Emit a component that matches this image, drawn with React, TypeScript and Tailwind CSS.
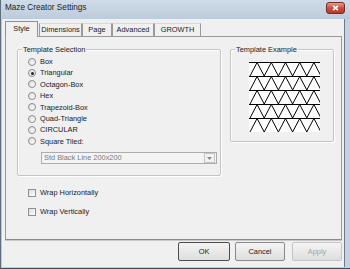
import React from "react";

const font = { fontFamily: '"Liberation Sans", Arial, sans-serif' };

function Radio({ label, checked }: { label: string; checked?: boolean }) {
  return (
    <div className="flex items-center h-[11.4px]">
      <span className="w-[8px] h-[8px] rounded-full border border-[#8a8a8a] bg-gradient-to-br from-[#dedede] to-[#ffffff] flex items-center justify-center shrink-0">
        {checked && <span className="w-[3px] h-[3px] rounded-full bg-[#1e1e1e]" />}
      </span>
      <span className="ml-[4px] text-[#1a1a1a]">{label}</span>
    </div>
  );
}

function Check({ label }: { label: string }) {
  return (
    <div className="flex items-center h-[11.4px]">
      <span className="w-[8px] h-[8px] border border-[#8e8f8f] bg-gradient-to-br from-[#dcdcdc] to-[#ffffff] shrink-0" />
      <span className="ml-[4px] text-[#1a1a1a]">{label}</span>
    </div>
  );
}

function Triangles() {
  const rows = [0, 14, 28, 42, 56];
  return (
    <svg width="71" height="70" viewBox="0 0 71 70" className="block bg-white">
      {rows.map((y, r) => {
        const pts: string[] = [];
        const bottom = r === rows.length - 1 ? 70 : y + 14;
        for (let k = 0; k < 6; k++) {
          const bx = 1 + 14.2 * k;
          pts.push(`${bx},${bottom}`);
          pts.push(`${bx + 7.1},${y + 0.5}`);
        }
        return (
          <g key={r} stroke="#000" strokeWidth="1" fill="none">
            <line x1="0" y1={y + 0.5} x2="71" y2={y + 0.5} />
            <polyline points={pts.join(" ")} />
          </g>
        );
      })}
    </svg>
  );
}

function Group({
  title,
  className,
  children,
}: {
  title: string;
  className: string;
  children?: React.ReactNode;
}) {
  return (
    <div
      className={`border border-[#c4c4c4] rounded-[2px] shadow-[inset_1px_1px_0_#ffffff,1px_1px_0_#ffffff] ${className}`}
    >
      <div className="-mt-[5px] ml-[4px] px-[1px] w-fit leading-[9px] bg-[#f0f0f0] text-[#1a1a1a]">
        {title}
      </div>
      {children}
    </div>
  );
}

function Tab({ label, w, active }: { label: string; w: string; active?: boolean }) {
  if (active) {
    return (
      <div
        className={`${w} h-[16px] -mb-px border border-b-0 border-[#8e8f8f] bg-[#f0f0f0] flex items-center justify-center pb-[1px] relative z-10 text-[#1a1a1a]`}
      >
        {label}
      </div>
    );
  }
  return (
    <div
      className={`${w} h-[13px] border-x border-t border-x-[#9a9a9a] border-t-[#dadada] bg-[#f0f0f0] flex items-center justify-center text-[#1a1a1a]`}
    >
      {label}
    </div>
  );
}

function Btn({ label, w, def, disabled }: { label: string; w: string; def?: boolean; disabled?: boolean }) {
  return (
    <div
      className={`${w} h-[19px] rounded-[2px] border flex items-center justify-center bg-gradient-to-b from-[#f4f4f4] to-[#dedede] ${
        def ? "border-[#4e4e4e]" : disabled ? "border-[#c4c4c4]" : "border-[#8a8a8a]"
      } ${disabled ? "text-[#a3a3a3]" : "text-[#1a1a1a]"}`}
    >
      {label}
    </div>
  );
}

export default function App() {
  return (
    <div
      style={font}
      className="w-[350px] h-[269px] bg-[#c3d2e2] border-l border-l-[#5d6e80] flex flex-col text-[7.4px] leading-none overflow-hidden"
    >
      {/* Title bar */}
      <div className="h-[19px] shrink-0 flex items-center pl-[4px] pr-[5px] bg-gradient-to-b from-[#cfdbe8] to-[#bccbdc]">
        <span className="text-[8.2px] text-[#1c1c1c] mt-[-2px]">Maze Creator Settings</span>
        <div className="ml-auto mt-[-3px] w-[19px] h-[12px] rounded-[3px] border border-[#7a2a22] bg-gradient-to-b from-[#e49a8c] via-[#c7503f] to-[#b3382a] flex items-center justify-center">
          <svg width="7" height="6" viewBox="0 0 7 6">
            <path d="M1 0.8 L6 5.2 M6 0.8 L1 5.2" stroke="#ffffff" strokeWidth="1.6" />
          </svg>
        </div>
      </div>

      {/* Client + frame */}
      <div className="flex-1 min-h-0 flex">
        <div className="w-[1px] bg-[#b9c9d9]" />
        <div className="flex-1 min-h-0 flex flex-col bg-[#f0f0f0] pl-[3px] pr-[2px] pt-[2px] pb-[6px] border-r border-r-[#6b7b8c]">
          {/* Tabs */}
          <div className="flex items-end h-[15px] shrink-0">
            <Tab label="Style" w="w-[33px]" active />
            <div className="w-[1px]" />
            <Tab label="Dimensions" w="w-[43px]" />
            <Tab label="Page" w="w-[30px]" />
            <Tab label="Advanced" w="w-[42px]" />
            <Tab label="GROWTH" w="w-[47px]" />
          </div>

          {/* Panel */}
          <div className="flex-1 min-h-0 border border-[#9a9a9a] border-b-[#8a8a8a] shadow-[0_1px_0_#c8c8c8] bg-[#f0f0f0] flex flex-col">
            <div className="flex mt-[12px] ml-[11px]">
              <Group title="Template Selection" className="w-[204px] h-[127px]">
                <div className="pl-[10px] mt-[2px]">
                  <Radio label="Box" />
                  <Radio label="Triangular" checked />
                  <Radio label="Octagon-Box" />
                  <Radio label="Hex" />
                  <Radio label="Trapezoid-Box" />
                  <Radio label="Quad-Triangle" />
                  <Radio label="CIRCULAR" />
                  <Radio label="Square Tiled:" />
                </div>
                <div className="ml-[23px] mt-[5px] w-[176px] h-[12px] border border-[#a9adb2] bg-[#f4f4f4] flex items-center">
                  <span className="ml-[2px] text-[#7a7a7a]">Std Black Line 200x200</span>
                  <div className="ml-auto mr-[1px] w-[11px] h-[10px] border border-[#c2c6ca] bg-[#f2f2f2] flex items-center justify-center">
                    <svg width="5" height="3" viewBox="0 0 5 3">
                      <path d="M0 0 L5 0 L2.5 3 Z" fill="#8a8a8a" />
                    </svg>
                  </div>
                </div>
              </Group>
              <Group title="Template Example" className="ml-[9px] w-[104px] h-[93px]">
                <div className="ml-[18px] mt-[8px]">
                  <Triangles />
                </div>
              </Group>
            </div>
            <div className="ml-[22px] mt-[11px] flex flex-col gap-[7.6px]">
              <Check label="Wrap Horizontally" />
              <Check label="Wrap Vertically" />
            </div>
          </div>

          {/* Buttons */}
          <div className="flex mt-[2px] ml-[173px] shrink-0">
            <Btn label="OK" w="w-[52px]" def />
            <div className="w-[5px]" />
            <Btn label="Cancel" w="w-[50px]" />
            <div className="w-[7px]" />
            <Btn label="Apply" w="w-[50px]" disabled />
          </div>
        </div>
        <div className="w-[5px] bg-[#c3d2e2]" />
      </div>
      <div className="h-[1px] bg-[#a9d9ec] shrink-0" />
      <div className="h-[1px] bg-[#1d5c6c] shrink-0" />
    </div>
  );
}
